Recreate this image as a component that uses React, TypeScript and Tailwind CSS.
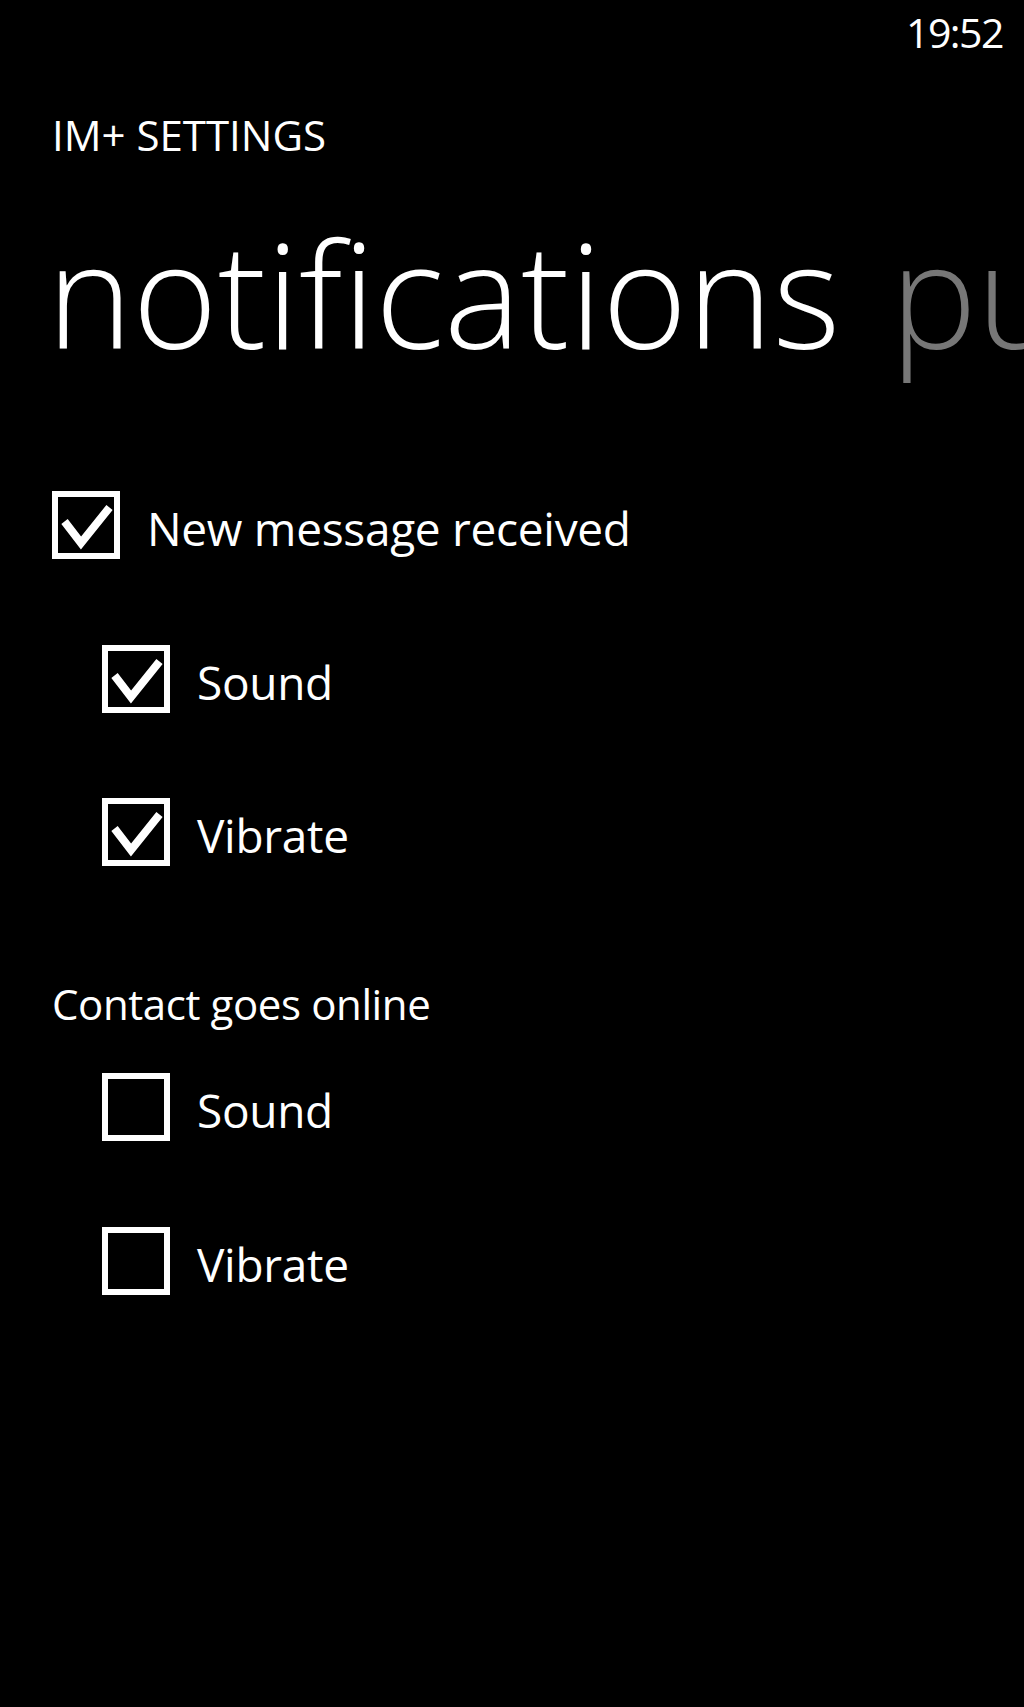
import React from "react";

const font = { fontFamily: '"Open Sans", "Noto Sans", sans-serif' };

function Box({ checked }: { checked: boolean }) {
  return (
    <div className="w-[68px] h-[68px] shrink-0 border-[6px] border-white relative">
      {checked && (
        <svg className="absolute left-[-6px] top-[-6px]" width="68" height="68" viewBox="0 0 68 68">
          <polyline points="12.5,30.5 29,52 57.5,16.5" fill="none" stroke="white" strokeWidth="8" strokeLinejoin="miter" strokeLinecap="butt" />
        </svg>
      )}
    </div>
  );
}

function Row({ checked, label, indent, className }: { checked: boolean; label: string; indent: boolean; className: string }) {
  return (
    <div className={`flex items-center ${indent ? "pl-[102px]" : "pl-[52px]"} ${className}`}>
      <Box checked={checked} />
      <span className="ml-[27px] text-[46px] leading-none text-white translate-y-[3px] tracking-[-0.3px]">{label}</span>
    </div>
  );
}

export default function App() {
  return (
    <div className="w-[1024px] h-[1707px] bg-black overflow-hidden text-white" style={font}>
      <div className="flex justify-end pt-[12px] pr-[21px]">
        <span className="text-[41px] leading-none tracking-[-1.5px]">19:52</span>
      </div>
      <div className="mt-[61px] pl-[52px] text-[42px] leading-none">IM+ SETTINGS</div>
      <div className="mt-[64px] pl-[47px] text-[145px] leading-none font-light whitespace-nowrap flex">
        <span>notifications</span>
        <span className="ml-[50px] text-[#777777]">pu</span>
      </div>
      <Row className="mt-[126px]" checked label="New message received" indent={false} />
      <Row className="mt-[86px]" checked label="Sound" indent />
      <Row className="mt-[85px]" checked label="Vibrate" indent />
      <div className="mt-[117px] pl-[52px] text-[42px] leading-none tracking-[-0.4px]">Contact goes online</div>
      <Row className="mt-[48px]" checked={false} label="Sound" indent />
      <Row className="mt-[86px]" checked={false} label="Vibrate" indent />
    </div>
  );
}
